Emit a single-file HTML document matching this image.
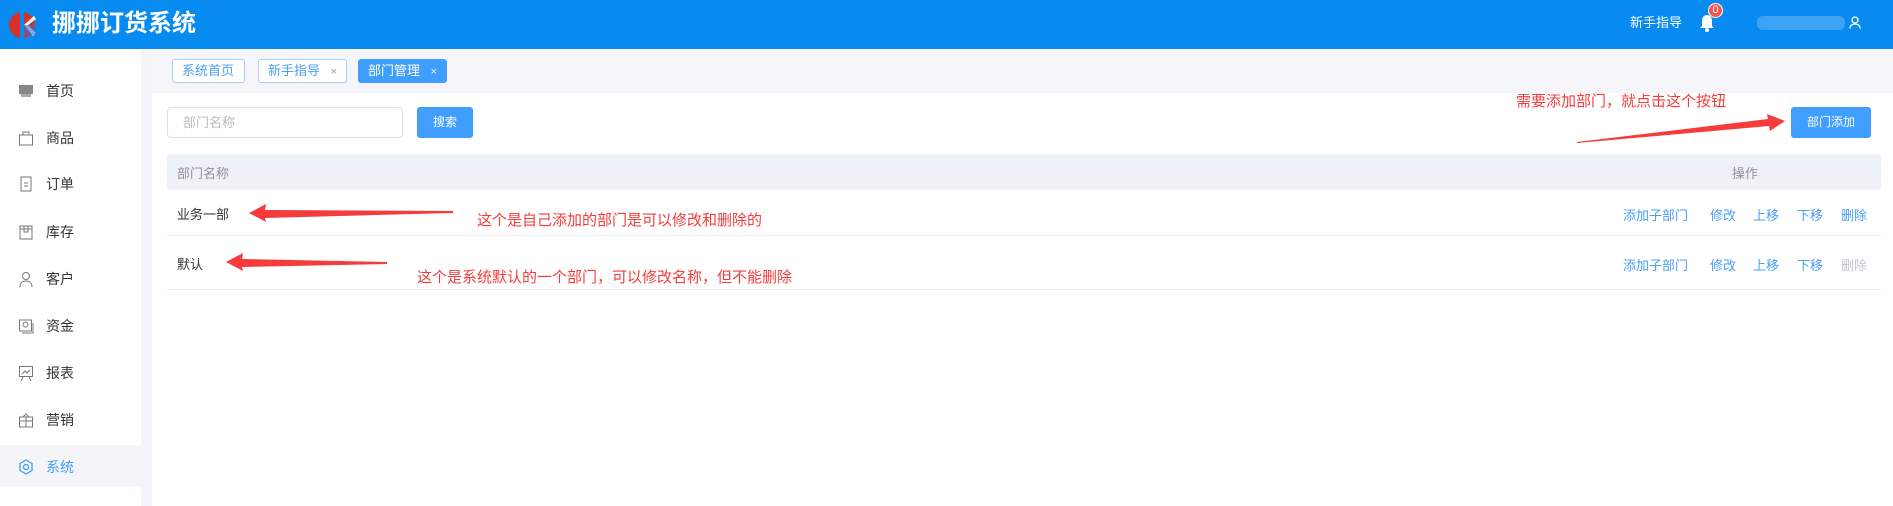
<!DOCTYPE html>
<html><head><meta charset="utf-8"><style>
*{margin:0;padding:0;box-sizing:border-box}
body{width:1893px;height:506px;overflow:hidden;background:#fff;font-family:"Liberation Sans","Noto Sans CJK SC",sans-serif;position:relative}
.a{position:absolute;white-space:nowrap}
.hd{left:0;top:0;width:1893px;height:49px;background:#078bf1}
.side{left:0;top:49px;width:141px;height:457px;background:#fff}
.strip{left:141px;top:49px;width:11px;height:457px;background:#f4f5f9}
.tabbar{left:152px;top:49px;width:1741px;height:44px;background:#f6f6fa}
.tab{top:59px;height:24px;border:1px solid #a9d2fb;border-radius:3px;background:#fff;color:#4a9ff5;font-size:13px;line-height:22px;padding-left:9px}
.mi{left:46px;font-size:14px;color:#333;line-height:16px}
.ic{left:18px;width:16px;height:16px}
.red{color:#f53b3b;font-size:15px}
.act{font-size:13px;color:#4a9ff5}
</style></head><body>
<div class="a hd"></div>
<svg class="a" style="left:7px;top:11px" width="30" height="28" viewBox="0 0 30 28"><circle cx="15" cy="14" r="13" fill="#d9302a"/><rect x="13" y="0" width="4" height="28" fill="#078bf1"/><path d="M17 14 L27 5 L29 8 L21 14 L29 22 L26 25 Z" fill="#fff"/><rect x="17" y="14" width="12" height="10" fill="#2a6fd0" opacity=".6"/></svg>
<div class="a" style="left:52px;top:10px;font-size:24px;font-weight:bold;color:#fff;line-height:28px">挪挪订货系统</div>
<div class="a" style="left:1630px;top:15px;font-size:13px;color:#fff;line-height:16px">新手指导</div>
<svg class="a" style="left:1699px;top:14px" width="16" height="18" viewBox="0 0 16 18"><path d="M8 1C4.5 1 3 4 3 7v5l-2 2h14l-2-2V7c0-3-1.5-6-5-6z" fill="#fff"/><circle cx="8" cy="16" r="2" fill="#fff"/></svg>
<div class="a" style="left:1708px;top:3px;width:15px;height:15px;border-radius:50%;background:#f0584d;border:1px solid #fff;color:#fff;font-size:11px;line-height:13px;text-align:center">0</div>
<div class="a" style="left:1757px;top:16px;width:88px;height:14px;background:#4aa8f5;border-radius:6px;opacity:.8"></div>
<svg class="a" style="left:1849px;top:16px" width="12" height="13" viewBox="0 0 12 13"><circle cx="6" cy="4" r="3" fill="none" stroke="#fff" stroke-width="1.3"/><path d="M1 12.5c0-3 2-4.5 5-4.5s5 1.5 5 4.5" fill="none" stroke="#fff" stroke-width="1.3"/></svg>

<div class="a side"></div>
<div class="a strip"></div>
<div class="a" style="left:0;top:445px;width:141px;height:42px;background:#f4f5f9"></div>
<div class="a tabbar"></div>
<div class="a tab" style="left:172px;width:73px">系统首页</div>
<div class="a tab" style="left:258px;width:89px">新手指导 <span style="color:#999;font-size:11px;margin-left:7px">×</span></div>
<div class="a tab" style="left:358px;width:89px;background:#409eff;border-color:#409eff;color:#fff">部门管理 <span style="font-size:11px;margin-left:7px">×</span></div>

<svg class="a ic" style="top:83px" viewBox="0 0 16 16"><rect x="1" y="2" width="14" height="9" fill="#888"/><rect x="3" y="11" width="10" height="3" fill="#aaa"/></svg>
<div class="a mi" style="top:83px">首页</div>
<svg class="a ic" style="top:130px" viewBox="0 0 16 16" fill="none" stroke="#777"><rect x="1.5" y="5" width="13" height="10"/><path d="M5 5V2h6v3"/></svg>
<div class="a mi" style="top:130px">商品</div>
<svg class="a ic" style="top:176px" viewBox="0 0 16 16" fill="none" stroke="#777"><rect x="3" y="1" width="10" height="14"/><path d="M6 7h4M6 10h4"/></svg>
<div class="a mi" style="top:176px">订单</div>
<svg class="a ic" style="top:224px" viewBox="0 0 16 16" fill="none" stroke="#777"><rect x="2" y="2" width="12" height="13"/><path d="M6 2v6h4V2M2 5h12"/></svg>
<div class="a mi" style="top:224px">库存</div>
<svg class="a ic" style="top:271px" viewBox="0 0 16 16" fill="none" stroke="#777"><circle cx="8" cy="5" r="3.5"/><path d="M2 16c0-4 2.5-6 6-6s6 2 6 6"/></svg>
<div class="a mi" style="top:271px">客户</div>
<svg class="a ic" style="top:318px" viewBox="0 0 16 16" fill="none" stroke="#777"><rect x="1.5" y="2" width="12" height="11"/><circle cx="7.5" cy="6.5" r="2.5"/><path d="M4 15h11V5"/></svg>
<div class="a mi" style="top:318px">资金</div>
<svg class="a ic" style="top:365px" viewBox="0 0 16 16" fill="none" stroke="#777"><rect x="1.5" y="1.5" width="13" height="10"/><path d="M4 9l3-3 2 2 3-3M5 12l-2 4M11 12l2 4"/></svg>
<div class="a mi" style="top:365px">报表</div>
<svg class="a ic" style="top:412px" viewBox="0 0 16 16" fill="none" stroke="#777"><rect x="1.5" y="5" width="13" height="10"/><path d="M1.5 9h13M8 5v10M5 5l3-3 3 3"/></svg>
<div class="a mi" style="top:412px">营销</div>
<svg class="a ic" style="top:459px" viewBox="0 0 16 16" fill="none" stroke="#409eff" stroke-width="1.3"><path d="M8 1l6 3.5v7L8 15l-6-3.5v-7z"/><circle cx="8" cy="8" r="2.5"/></svg>
<div class="a mi" style="top:459px;color:#409eff">系统</div>

<div class="a" style="left:167px;top:107px;width:236px;height:31px;border:1px solid #dcdfe6;border-radius:4px;font-size:13px;color:#bbb;line-height:29px;padding-left:15px">部门名称</div>
<div class="a" style="left:417px;top:107px;width:56px;height:31px;background:#409eff;border-radius:3px;color:#fff;font-size:12px;line-height:31px;text-align:center">搜索</div>
<div class="a" style="left:1791px;top:107px;width:80px;height:31px;background:#409eff;border-radius:3px;color:#fff;font-size:12px;line-height:31px;text-align:center">部门添加</div>

<div class="a" style="left:167px;top:154px;width:1714px;height:36px;background:#eef1f8"></div>
<div class="a" style="left:177px;top:163px;font-size:13px;color:#909399">部门名称</div>
<div class="a" style="left:1732px;top:163px;font-size:13px;color:#909399">操作</div>
<div class="a" style="left:167px;top:235px;width:1714px;height:1px;background:#ebeef5"></div>
<div class="a" style="left:167px;top:289px;width:1714px;height:1px;background:#ebeef5"></div>
<div class="a" style="left:177px;top:204px;font-size:13px;color:#333">业务一部</div>
<div class="a" style="left:177px;top:254px;font-size:13px;color:#333">默认</div>

<div class="a act" style="left:1623px;top:205px">添加子部门</div>
<div class="a act" style="left:1710px;top:205px">修改</div>
<div class="a act" style="left:1753px;top:205px">上移</div>
<div class="a act" style="left:1797px;top:205px">下移</div>
<div class="a act" style="left:1841px;top:205px">删除</div>
<div class="a act" style="left:1623px;top:255px">添加子部门</div>
<div class="a act" style="left:1710px;top:255px">修改</div>
<div class="a act" style="left:1753px;top:255px">上移</div>
<div class="a act" style="left:1797px;top:255px">下移</div>
<div class="a act" style="left:1841px;top:255px;color:#c0c4cc">删除</div>

<svg class="a" style="left:0;top:0" width="1893" height="506">
<path d="M249 213 L266 204 L265 210 L453 211 L453 213 L265 218 L266 222 Z" fill="#f53b3b"/>
<path d="M226 262 L243 253 L242 259 L387 262 L387 264 L242 267 L243 271 Z" fill="#f53b3b"/>
<path d="M1785 121 L1767 114 L1768 119 L1577 142 L1577 143 L1769 126 L1770 131 Z" fill="#f53b3b"/>
</svg>
<div class="a red" style="left:477px;top:209px">这个是自己添加的部门是可以修改和删除的</div>
<div class="a red" style="left:417px;top:266px">这个是系统默认的一个部门，可以修改名称，但不能删除</div>
<div class="a red" style="left:1516px;top:90px">需要添加部门，就点击这个按钮</div>
</body></html>
